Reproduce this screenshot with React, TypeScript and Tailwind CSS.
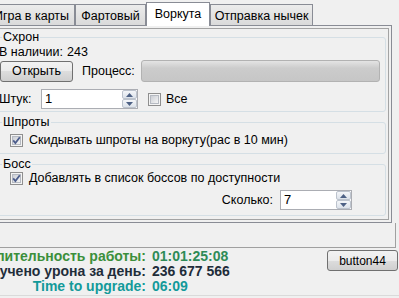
import React from 'react';

const Tab = ({ label, w, active }: { label: string; w: string; active?: boolean }) => (
  <div
    className={`${w} flex items-center justify-center whitespace-nowrap border border-b-0 border-[#898c95] ${
      active
        ? 'h-[24px] mb-[-1px] bg-white pb-[2px]'
        : 'h-[21px] bg-linear-to-b from-[#ececec] to-[#dadada] pt-[1px]'
    }`}
  >
    {label}
  </div>
);

const CheckBox = ({ checked }: { checked?: boolean }) => (
  <svg width="13" height="13" viewBox="0 0 13 13" className="shrink-0">
    <defs>
      <linearGradient id="cbfill" x1="0" y1="0" x2="1" y2="1">
        <stop offset="0" stopColor="#c9ccd3" />
        <stop offset="1" stopColor="#f7f7f7" />
      </linearGradient>
    </defs>
    <rect x="0.5" y="0.5" width="12" height="12" fill="#f4f4f4" stroke="#8f8f8f" />
    <rect x="2.5" y="2.5" width="8" height="8" fill="url(#cbfill)" stroke="#b6bac2" />
    {checked && <path d="M3.2 6.4 L5.4 9 L9.8 3.3" fill="none" stroke="#4c5d8c" strokeWidth="1.8" />}
  </svg>
);

const SpinBtn = ({ up }: { up?: boolean }) => (
  <div className="flex h-[9px] items-center justify-center rounded-[2px] border border-[#bcc3cd] bg-linear-to-b from-[#f4f6f9] to-[#dce2ea]">
    <svg width="7" height="4" viewBox="0 0 7 4">
      <path d={up ? 'M0 4 L3.5 0 L7 4 Z' : 'M0 0 L3.5 4 L7 0 Z'} fill="#4d6185" />
    </svg>
  </div>
);

const Numeric = ({ value, w }: { value: string; w: string }) => (
  <div className={`${w} flex h-[20px] border border-[#abadb3] bg-white`}>
    <div className="flex-1 pl-[3px] text-[13px] leading-[18px]">{value}</div>
    <div className="flex w-[15px] flex-col">
      <SpinBtn up />
      <SpinBtn />
    </div>
  </div>
);

export default function App() {
  return (
    <div className="h-[298px] w-[399px] overflow-hidden bg-[#f0f0f0] font-['Liberation_Sans',Arial,sans-serif] text-[12.5px] leading-[14px] text-black">
      {/* tabs */}
      <div className="relative z-10 ml-[-12px] flex h-[25px] items-end">
        <Tab label="Игра в карты" w="w-[87px]" />
        <Tab label="Фартовый" w="w-[71px]" />
        <Tab label="Воркута" w="w-[64px]" active />
        <Tab label="Отправка нычек" w="w-[103px]" />
      </div>

      {/* tab page */}
      <div className="ml-[-12px] w-[404px] border border-[#898c95] px-[2px] pt-[2px] pb-[2px]">
        <div className="border border-[#a3a3a3] px-[2px] pt-[2px] pb-[3px]">
          <fieldset className="rounded-[3px] border border-[#d5dfe5] pb-[2px]">
            <legend className="ml-[7px] px-[1px] leading-[13px]">Схрон</legend>
            <div className="mt-[1px] flex pl-[4px]">
              <span className="w-[68px]">В наличии:</span>
              <span>243</span>
            </div>
            <div className="mt-[1px] flex items-center pl-[5px]">
              <button className="h-[21px] w-[73px] rounded-[3px] border border-[#707070] bg-[linear-gradient(#f2f2f2,#ebebeb_50%,#dddddd_50%,#cfcfcf)]">
                Открыть
              </button>
              <span className="ml-[9px] w-[59px]">Процесс:</span>
              <div className="h-[22px] w-[239px] rounded-[3px] border border-[#b2b2b2] bg-[linear-gradient(#e4e4e4,#cccccc_35%,#c6c6c6)]" />
            </div>
            <div className="mt-[7px] flex items-center pl-[4px]">
              <span className="w-[42px]">Штук:</span>
              <Numeric value="1" w="w-[97px]" />
              <span className="ml-[10px]">
                <CheckBox />
              </span>
              <span className="ml-[5px]">Все</span>
            </div>
          </fieldset>

          <fieldset className="mt-[4px] rounded-[3px] border border-[#d5dfe5] pb-[6px]">
            <legend className="ml-[7px] px-[1px] leading-[13px]">Шпроты</legend>
            <div className="mt-[4px] flex items-center gap-[6px] pl-[15px]">
              <CheckBox checked />
              <span>Скидывать шпроты на воркуту(рас в 10 мин)</span>
            </div>
          </fieldset>

          <fieldset className="mt-[4px] rounded-[3px] border border-[#d5dfe5] pb-[5px]">
            <legend className="ml-[7px] px-[1px] leading-[13px]">Босс</legend>
            <div className="mt-0 flex items-center gap-[6px] pl-[15px]">
              <CheckBox checked />
              <span>Добавлять в список боссов по доступности</span>
            </div>
            <div className="mt-[5px] flex items-center justify-end gap-[7px] pr-[33px]">
              <span>Сколько:</span>
              <Numeric value="7" w="w-[72px]" />
            </div>
          </fieldset>
        </div>
      </div>

      <div className="h-[25px] w-[396px] border-r border-b border-[#a0a0a0]" />

      {/* status */}
      <div className="flex h-[47px] pt-[2px]">
        <div className="grid grid-cols-[146px_auto] gap-x-[6px] text-[14px] leading-[13.5px] font-bold whitespace-nowrap">
          <div className="flex justify-end text-[#3b8f3b]">Длительность работы:</div>
          <div className="text-[#2e8b57]">01:01:25:08</div>
          <div className="flex justify-end text-[#1f2d3a]">Получено урона за день:</div>
          <div className="text-[#1f2d3a]">236 677 566</div>
          <div className="flex justify-end text-[#139a9a]">Time to upgrade:</div>
          <div className="text-[#139a9a]">06:09</div>
        </div>
        <button className="mr-[1px] ml-auto h-[21px] w-[71px] rounded-[3px] border border-[#707070] bg-[linear-gradient(#f2f2f2,#ebebeb_50%,#dddddd_50%,#cfcfcf)] text-[12px]">
          button44
        </button>
      </div>
      <div className="border-t border-[#dadada]" />
    </div>
  );
}
